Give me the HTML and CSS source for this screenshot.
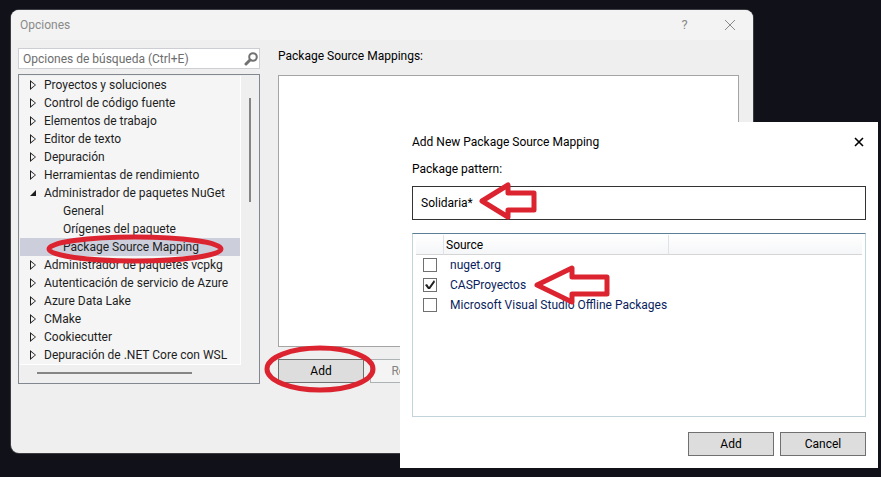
FILE: index.html
```html
<!DOCTYPE html>
<html lang="es">
<head>
<meta charset="utf-8">
<title>Opciones</title>
<link rel="stylesheet" href="styles.css">
</head>
<body>
<main class="desktop">
  <section class="options" aria-label="Opciones">
    <header class="titlebar">
      <h1 class="titlebar-text">Opciones</h1>
      <button class="titlebar-button" type="button">?</button>
      <button class="titlebar-button" type="button" aria-label="Cerrar">
        <svg width="12" height="12" viewBox="0 0 12 12"><path d="M1 1 11 11M11 1 1 11" fill="none" stroke="#8a8a8a"/></svg>
      </button>
    </header>
    <div class="options-body">
      <nav class="sidebar">
        <div class="search">
          <input class="search-input" type="text" aria-label="Opciones de búsqueda" placeholder="Opciones de búsqueda (Ctrl+E)">
          <svg class="search-icon" width="14" height="14" viewBox="0 0 14 14"><circle cx="9" cy="5" r="3.800" fill="none" stroke="#717171" stroke-width="2"/><path d="M6 8 2 12" stroke="#717171" stroke-width="3" stroke-linecap="round"/></svg>
        </div>
        <div class="tree">
          <ul class="tree-list">
            <li class="node">Proyectos y soluciones</li>
            <li class="node">Control de código fuente</li>
            <li class="node">Elementos de trabajo</li>
            <li class="node">Editor de texto</li>
            <li class="node">Depuración</li>
            <li class="node">Herramientas de rendimiento</li>
            <li class="node node-open">Administrador de paquetes NuGet</li>
            <li class="leaf">General</li>
            <li class="leaf">Orígenes del paquete</li>
            <li class="leaf leaf-selected">Package Source Mapping
              <svg class="mark mark-node" width="178" height="30" viewBox="0 0 178 30"><ellipse cx="89" cy="15" rx="86" ry="12"/></svg>
            </li>
            <li class="node">Administrador de paquetes vcpkg</li>
            <li class="node">Autenticación de servicio de Azure</li>
            <li class="node">Azure Data Lake</li>
            <li class="node">CMake</li>
            <li class="node">Cookiecutter</li>
            <li class="node">Depuración de .NET Core con WSL</li>
          </ul>
          <div class="scroll-y"><div class="thumb-y"></div></div>
          <div class="scroll-x"><div class="thumb-x"></div></div>
        </div>
      </nav>
      <section class="mappings">
        <h2 class="mappings-title">Package Source Mappings:</h2>
        <div class="mappings-list"></div>
        <div class="mappings-actions">
          <div class="marked">
            <button class="button" type="button">Add</button>
            <svg class="mark mark-add" width="112" height="48" viewBox="0 0 112 48"><ellipse cx="56" cy="24" rx="53" ry="21"/></svg>
          </div>
          <button class="button" type="button" disabled>Remove</button>
        </div>
      </section>
    </div>
  </section>

  <section class="dialog" aria-label="Add New Package Source Mapping">
    <header class="dialog-header">
      <h2 class="dialog-title">Add New Package Source Mapping</h2>
      <button class="dialog-close" type="button" aria-label="Close">
        <svg width="10" height="10" viewBox="0 0 10 10"><path d="M1 1 9 9M9 1 1 9" fill="none" stroke="#000" stroke-width="1.600"/></svg>
      </button>
    </header>
    <label class="pattern-label" for="pattern">Package pattern:</label>
    <div class="pattern">
      <input class="pattern-input" id="pattern" type="text" value="Solidaria*">
      <svg class="mark mark-pattern" width="60" height="40" viewBox="0 0 60 40"><path d="M3 20 29 4V12H55V29H29V36Z"/></svg>
    </div>
    <div class="sources">
      <table class="sources-table">
        <thead>
          <tr><th class="col-check"></th><th class="col-source">Source</th><th></th></tr>
        </thead>
        <tbody>
          <tr><td><input class="check" type="checkbox" id="s1"></td><td colspan="2"><label for="s1">nuget.org</label></td></tr>
          <tr><td><input class="check" type="checkbox" id="s2" checked></td><td colspan="2"><label for="s2">CASProyectos</label></td></tr>
          <tr><td><input class="check" type="checkbox" id="s3"></td><td colspan="2"><label for="s3">Microsoft Visual Studio Offline Packages</label></td></tr>
        </tbody>
      </table>
      <svg class="mark mark-source" width="78" height="40" viewBox="0 0 78 40"><path d="M4 20 39 3V12H74V29H39V37Z"/></svg>
    </div>
    <footer class="dialog-actions">
      <button class="button" type="button">Add</button>
      <button class="button" type="button">Cancel</button>
    </footer>
  </section>
</main>
</body>
</html>
```
FILE: styles.css
```css
* {
  box-sizing: border-box;
}

body {
  margin: 0;
  background: #11111a;
  color: #1e1e1e;
  font: 12px/18px Roboto, "Noto Sans", sans-serif;
}

h1,
h2,
ul {
  margin: 0;
  padding: 0;
  font-size: inherit;
  font-weight: normal;
  list-style: none;
}

input,
button {
  font: inherit;
  color: inherit;
}

.desktop {
  position: relative;
  display: flex;
  min-height: 100vh;
  padding: 10px 128px 24px 11px;
}

.options {
  flex: 1;
  display: flex;
  flex-direction: column;
  background: #efefef;
  border-radius: 8px;
  box-shadow: 0 0 0 1px #3c3c42;
}

.titlebar {
  display: flex;
  align-items: center;
  height: 30px;
  padding: 0 1px 0 9px;
  background: #f3f3f3;
  border-radius: 8px 8px 0 0;
  color: #8a8a8a;
}

.titlebar-text {
  flex: 1;
}

.titlebar-button {
  display: flex;
  align-items: center;
  justify-content: center;
  width: 45px;
  height: 28px;
  padding: 0;
  border: 0;
  background: none;
  font-size: 13px;
}

.options-body {
  flex: 1;
  display: flex;
  gap: 18px;
  padding: 8px 14px 0 7px;
}

.sidebar {
  width: 242px;
}

.search {
  display: flex;
  align-items: center;
  height: 21px;
  margin-bottom: 5px;
  padding: 0 1px 0 4px;
  border: 1px solid #ccced4;
  background: #fff;
}

.search-input {
  flex: 1;
  min-width: 0;
  height: 18px;
  padding: 0;
  border: 0;
  outline: 0;
  background: none;
}

.search-input::placeholder {
  color: #6d6d6d;
  opacity: 1;
}

.tree {
  display: grid;
  grid-template-columns: 1fr 17px;
  padding: 1px;
  border: 1px solid #828790;
}

.tree-list {
  border-right: 1px solid #fff;
  border-bottom: 1px solid #fff;
  background: #f5f5f5;
}

.node,
.leaf {
  position: relative;
  display: flex;
  align-items: center;
  height: 18px;
  white-space: nowrap;
}

.node::before {
  content: "";
  width: 6px;
  height: 10px;
  margin: 0 8px 0 10px;
  background: #1e1e1e;
  clip-path: polygon(evenodd, 0 0, 6px 5px, 0 10px, 0 0, 1px 2px, 1px 8px, 5px 5px, 1px 2px);
}

.node-open::before {
  height: 6px;
  clip-path: polygon(100% 0, 100% 100%, 0 100%);
}

.leaf {
  padding-left: 43px;
}

.leaf-selected {
  background: #cccedb;
}

.scroll-y {
  padding: 22px 0 0 8px;
}

.thumb-y {
  width: 2px;
  height: 104px;
  background: #858585;
}

.scroll-x {
  grid-column: 1 / -1;
  height: 17px;
  padding: 7px 0 0 17px;
}

.thumb-x {
  width: 155px;
  height: 2px;
  background: #858585;
}

.mappings {
  flex: 1;
  min-width: 0;
}

.mappings-title {
  height: 27px;
  color: #000;
  line-height: 16px;
}

.mappings-list {
  height: 272px;
  border: 1px solid #a5a5a5;
  background: #fff;
}

.mappings-actions {
  display: flex;
  gap: 6px;
  margin-top: 12px;
}

.marked {
  position: relative;
}

.button {
  width: 86px;
  height: 24px;
  padding: 0;
  border: 1px solid #707070;
  background: #ddd;
  color: #000;
  line-height: 20px;
}

.button:disabled {
  border-color: #adb2b5;
  background: #f4f4f4;
  color: #838383;
}

.dialog {
  position: absolute;
  top: 122px;
  right: 3px;
  left: 400px;
  padding: 10px 12px 12px;
  background: #fff;
  color: #000;
}

.dialog-header {
  display: flex;
  align-items: center;
  justify-content: space-between;
  height: 20px;
  margin-bottom: 8px;
}

.dialog-close {
  display: flex;
  padding: 2px;
  border: 0;
  background: none;
}

.pattern-label {
  display: block;
  height: 26px;
}

.pattern {
  position: relative;
  margin-bottom: 13px;
}

.pattern-input {
  display: block;
  width: 100%;
  height: 34px;
  padding: 0 8px;
  border: 1px solid #333;
  outline: 0;
  background: #fff;
}

.sources {
  position: relative;
  height: 184px;
  padding: 1px 3px;
  border: 1px solid #c2d3da;
  border-top-color: #5b7f96;
}

.sources-table {
  width: 100%;
  border-collapse: separate;
  border-spacing: 0;
  table-layout: fixed;
  color: #0a1e5e;
}

.sources-table th {
  height: 20px;
  padding: 0 2px;
  border-right: 1px solid #dfe3e8;
  border-bottom: 1px solid #d5d5d5;
  background: linear-gradient(#fff, #f5f6f8);
  color: #000;
  font-weight: normal;
  text-align: left;
}

.sources-table th:last-child {
  border-right: 0;
}

.sources-table .col-check {
  width: 28px;
}

.sources-table .col-source {
  width: 225px;
}

.sources-table td {
  height: 20px;
  padding: 0 6px;
  line-height: 20px;
}

.check {
  display: block;
  width: 14px;
  height: 14px;
  margin: 0 0 0 1px;
  appearance: none;
  border: 1px solid #707070;
  background: #fff;
}

.check:checked::before {
  content: "";
  display: block;
  width: 12px;
  height: 12px;
  background: #212121;
  clip-path: polygon(1px 6px, 3px 5px, 5px 8px, 10px 1px, 11px 3px, 6px 10px, 4px 10px);
}

.dialog-actions {
  display: flex;
  justify-content: flex-end;
  gap: 6px;
  margin-top: 15px;
}

.mark {
  position: absolute;
  z-index: 1;
  fill: none;
  stroke: #dc2430;
  stroke-width: 5;
  stroke-linejoin: round;
  pointer-events: none;
}

.mark-node {
  top: -4px;
  left: 26px;
}

.mark-add {
  top: -14px;
  left: -14px;
}

.mark-pattern {
  top: -5px;
  left: 67px;
}

.mark-source {
  top: 31px;
  left: 120px;
}
```
